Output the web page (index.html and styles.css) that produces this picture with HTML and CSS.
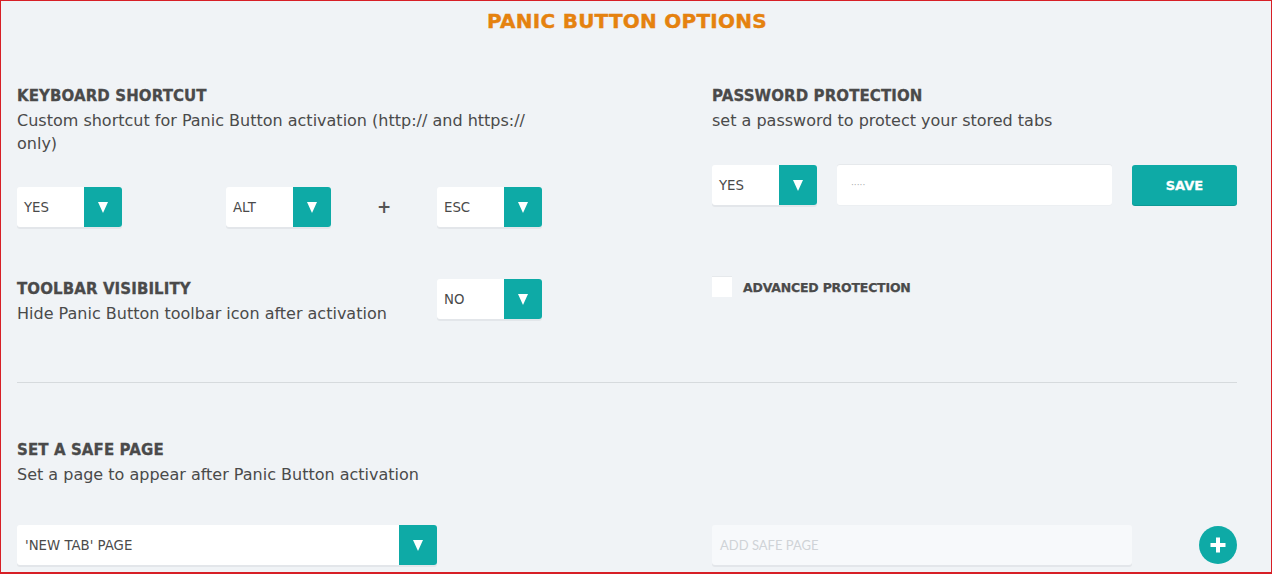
FILE: index.html
```html
<!DOCTYPE html>
<html>
<head>
<meta charset="utf-8">
<title>Panic Button Options</title>
<link rel="stylesheet" href="styles.css">
</head>
<body>
<div class="page">
  <h1 class="title">PANIC BUTTON OPTIONS</h1>

  <div class="cols top">
    <section class="block">
      <h2 class="heading">KEYBOARD SHORTCUT</h2>
      <p class="desc">Custom shortcut for Panic Button activation (http:// and https:// only)</p>
      <div class="shortcut-row">
        <div class="select"><span class="select-value">YES</span><span class="select-arrow"></span></div>
        <div></div>
        <div class="select"><span class="select-value">ALT</span><span class="select-arrow"></span></div>
        <div class="plus-sign">+</div>
        <div class="select"><span class="select-value">ESC</span><span class="select-arrow"></span></div>
      </div>
    </section>

    <section class="block">
      <h2 class="heading">PASSWORD PROTECTION</h2>
      <p class="desc">set a password to protect your stored tabs</p>
      <div class="password-row">
        <div class="select"><span class="select-value">YES</span><span class="select-arrow"></span></div>
        <div class="text-input"><span class="pw-dots">·····</span></div>
        <button class="save-btn">SAVE</button>
      </div>
    </section>
  </div>

  <div class="cols middle">
    <div class="toolbar-row">
      <div>
        <h2 class="heading">TOOLBAR VISIBILITY</h2>
        <p class="desc">Hide Panic Button toolbar icon after activation</p>
      </div>
      <div class="select"><span class="select-value">NO</span><span class="select-arrow"></span></div>
    </div>
    <div class="advanced-row">
      <span class="checkbox"></span>
      <span class="advanced-label">ADVANCED PROTECTION</span>
    </div>
  </div>

  <hr class="divider">

  <section class="safe">
    <h2 class="heading">SET A SAFE PAGE</h2>
    <p class="desc">Set a page to appear after Panic Button activation</p>
  </section>

  <div class="cols bottom">
    <div class="select select-wide"><span class="select-value">'NEW TAB' PAGE</span><span class="select-arrow"></span></div>
    <div class="add-row">
      <div class="text-input add-input"><span class="placeholder">ADD SAFE PAGE</span></div>
      <span class="add-btn"></span>
    </div>
  </div>
</div>
</body>
</html>
```

FILE: styles.css
```css
html, body {
  margin: 0;
  padding: 0;
}

body {
  background: #ffffff;
  font-family: "DejaVu Sans", "Noto Sans", sans-serif;
  color: #4a4a4a;
}

.page {
  box-sizing: border-box;
  width: 1272px;
  height: 574px;
  border: 1px solid #d71f26;
  border-bottom-width: 2px;
  background: #f0f3f6;
  padding: 0 34px 0 16px;
  overflow: hidden;
}

.title {
  margin: 0;
  padding-top: 8px;
  text-align: center;
  font-size: 20px;
  line-height: 24px;
  font-weight: 700;
  color: #e5820f;
  letter-spacing: 0.25px;
  -webkit-text-stroke: 0.4px #e5820f;
}

.cols {
  display: grid;
  grid-template-columns: 525px 525px;
  column-gap: 170px;
}

.top {
  margin-top: 53px;
}

.heading {
  margin: 0;
  font-size: 15px;
  line-height: 20px;
  font-weight: 700;
  color: #4a4a4a;
  letter-spacing: 0.1px;
  -webkit-text-stroke: 0.3px #4a4a4a;
}

.desc {
  margin: 3px 0 0;
  font-size: 16px;
  line-height: 23px;
  color: #4a4a4a;
}

.shortcut-row {
  margin-top: 32px;
  display: grid;
  grid-template-columns: 105px 104px 105px 106px 105px;
  align-items: center;
}

.password-row {
  margin-top: 33px;
  display: grid;
  grid-template-columns: 105px 275px 105px;
  column-gap: 20px;
}

.select {
  position: relative;
  box-sizing: border-box;
  width: 105px;
  height: 40px;
  background: #ffffff;
  border-radius: 3px;
  box-shadow: 0 2px 0 #e3e6ea;
  display: flex;
  align-items: center;
  overflow: hidden;
}

.select-value {
  flex: 1;
  padding-left: 7px;
  font-size: 13.3px;
  color: #4a4a4a;
  white-space: nowrap;
}

.select-arrow {
  width: 38px;
  height: 40px;
  background: #0eaaa6;
  display: flex;
  align-items: center;
  justify-content: center;
}

.select-arrow::before {
  content: "";
  display: block;
  width: 0;
  height: 0;
  border-left: 5.5px solid transparent;
  border-right: 5.5px solid transparent;
  border-top: 11px solid #ffffff;
}

.plus-sign {
  text-align: center;
  font-size: 17px;
  font-weight: 700;
  color: #555;
}

.text-input {
  box-sizing: border-box;
  height: 40px;
  background: #ffffff;
  border-radius: 3px;
  box-shadow: 0 -1px 0 #e6e9ec, 0 1px 0 #eceff2;
  display: flex;
  align-items: center;
  padding-left: 14px;
}

.pw-dots {
  font-size: 9px;
  color: #aaa;
  letter-spacing: 0;
}

.save-btn {
  height: 40px;
  border: 0;
  border-radius: 3px;
  background: #0eaaa6;
  box-shadow: 0 1px 0 #0c9995;
  color: #ffffff;
  font-family: "DejaVu Sans", sans-serif;
  font-weight: 700;
  font-size: 13px;
  -webkit-text-stroke: 0.3px #ffffff;
  padding: 0;
}

.middle {
  margin-top: 52px;
  align-items: start;
}

.toolbar-row {
  display: flex;
  justify-content: space-between;
  align-items: flex-start;
}

.advanced-row {
  display: flex;
  align-items: center;
  margin-top: -2px;
}

.checkbox {
  width: 20px;
  height: 20px;
  background: #ffffff;
  box-shadow: 0 -1px 0 #e6e9ec;
}

.advanced-label {
  margin-left: 11px;
  font-size: 12.5px;
  font-weight: 700;
  color: #4a4a4a;
  letter-spacing: -0.2px;
  -webkit-text-stroke: 0.25px #4a4a4a;
}

.divider {
  margin: 57px 0 0;
  width: 1220px;
  border: 0;
  border-top: 1px solid #d6dadd;
  height: 0;
}

.safe {
  margin-top: 57px;
}

.bottom {
  margin-top: 39px;
}

.select-wide {
  width: 420px;
}

.select-wide .select-value {
  padding-left: 8px;
}

.add-row {
  display: flex;
  justify-content: space-between;
  align-items: center;
}

.add-input {
  width: 420px;
  background: #f7f9fb;
  box-shadow: 0 2px 0 #e3e6ea;
  padding-left: 8px;
}

.placeholder {
  font-family: Lato, "Liberation Sans", sans-serif;
  font-size: 13px;
  color: #cfd3d7;
}

.add-btn {
  position: relative;
  width: 38px;
  height: 38px;
  border-radius: 50%;
  background: #0eaaa6;
}

.add-btn::before,
.add-btn::after {
  content: "";
  position: absolute;
  background: #ffffff;
  left: 50%;
  top: 50%;
  transform: translate(-50%, -50%);
}

.add-btn::before {
  width: 15px;
  height: 4px;
}

.add-btn::after {
  width: 4px;
  height: 15px;
}
```
